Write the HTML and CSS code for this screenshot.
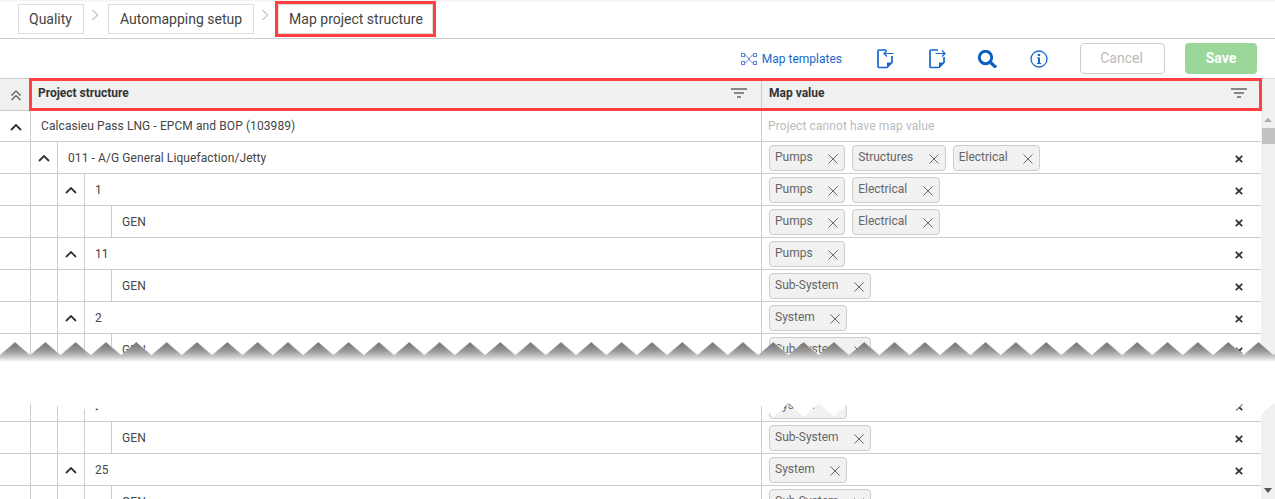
FILE: index.html
```html
<!DOCTYPE html>
<html lang="en">
<head>
  <meta charset="UTF-8">
  <title>Map project structure</title>
  <link rel="stylesheet" href="styles.css">
</head>
<body>
  <nav class="crumbs">
    <a class="crumb crumb-first">Quality</a>
    <svg class="crumb-sep" width="24" height="12" viewBox="0 0 24 12"><path d="M8.5 1l5 5-5 5" fill="none" stroke="#999" stroke-width="1"/></svg>
    <a class="crumb">Automapping setup</a>
    <svg class="crumb-sep" width="24" height="12" viewBox="0 0 24 12"><path d="M8.5 1l5 5-5 5" fill="none" stroke="#999" stroke-width="1"/></svg>
    <a class="crumb crumb-current">Map project structure</a>
  </nav>

  <div class="toolbar">
    <a class="tpl-link">
      <svg width="16" height="12" viewBox="0 0 16 12" fill="none" stroke="#5f86d6" stroke-width="1"><rect x=".5" y=".5" width="3" height="3"/><rect x="12.5" y=".5" width="3" height="3"/><rect x=".5" y="8.5" width="3" height="3"/><rect x="12.5" y="8.5" width="3" height="3"/><path d="M3.5 2C7 2 9 10 12.5 10M3.5 10C7 10 9 2 12.5 2"/></svg>
      Map templates
    </a>
    <svg class="tool tool-first" width="17" height="20" viewBox="0 0 17 20" fill="none" stroke="#1766cf" stroke-width="1.7"><path d="M9 1H2a1 1 0 0 0-1 1v15.500a1 1 0 0 0 1 1h8l5-5V7"/><path d="M10 18.500v-5h5z" fill="#1766cf" stroke="none"/><path d="M16.500 4.500H7M10 1.500l-3 3 3 3" stroke-width="1.200"/></svg>
    <svg class="tool tool-gap" width="17" height="20" viewBox="0 0 17 20" fill="none" stroke="#1766cf" stroke-width="1.7"><path d="M9 1H2a1 1 0 0 0-1 1v15.500a1 1 0 0 0 1 1h8l5-5V8"/><path d="M10 18.500v-5h5z" fill="#1766cf" stroke="none"/><path d="M6.500 4.500h9.500M13 1.500l3 3-3 3" stroke-width="1.200"/></svg>
    <svg class="tool tool-search" width="20" height="18" viewBox="0 0 20 18" fill="none" stroke="#0b5fc4"><circle cx="8.500" cy="7.500" r="6.200" stroke-width="3"/><path d="M13 12l6 5.500" stroke-width="3.200"/></svg>
    <svg class="tool tool-info" width="18" height="18" viewBox="0 0 18 18"><circle cx="9" cy="9" r="8" fill="none" stroke="#1766cf" stroke-width="1.3"/><circle cx="9" cy="5" r="1.3" fill="#1766cf"/><path d="M7 7.500h3v5.500h1.200v1H6.800v-1H8V8.500H7z" fill="#1766cf"/></svg>
    <button class="btn btn-cancel">Cancel</button>
    <button class="btn btn-save">Save</button>
  </div>

  <div class="grid">
    <div class="head-row">
      <div class="head-toggle">
        <svg width="12" height="11" viewBox="0 0 12 11" fill="none" stroke="#555" stroke-width="1.2"><path d="M1.500 5.500L6 1l4.500 4.500M1.500 10L6 5.500l4.500 4.500"/></svg>
      </div>
      <div class="head-cols">
        <div class="head-col head-col-name">Project structure
          <svg class="filter" width="16" height="10" viewBox="0 0 16 10" fill="#888"><path d="M0 0h16v2H0zM3 4h10v2H3zM6 8h4v2H6z"/></svg>
        </div>
        <div class="head-col head-col-value">Map value
          <svg class="filter" width="16" height="10" viewBox="0 0 16 10" fill="#888"><path d="M0 0h16v2H0zM3 4h10v2H3zM6 8h4v2H6z"/></svg>
        </div>
      </div>
      <div class="head-end"></div>
    </div>

    <div class="body">
      <div class="rows">
        <div class="row row-first">
          <div class="tree">
            <span class="lvl lvl-0"><svg class="chev" width="12" height="7" viewBox="0 0 12 7"><path d="M1 6l5-5 5 5"/></svg></span>
            <span class="name">Calcasieu Pass LNG - EPCM and BOP (103989)</span>
          </div>
          <div class="value"><span class="no-value">Project cannot have map value</span></div>
        </div>

        <div class="row">
          <div class="tree">
            <span class="lvl lvl-0"></span>
            <span class="lvl"><svg class="chev" width="12" height="7" viewBox="0 0 12 7"><path d="M1 6l5-5 5 5"/></svg></span>
            <span class="name">011 - A/G General Liquefaction/Jetty</span>
          </div>
          <div class="value">
            <span class="chip">Pumps<svg class="chip-x" width="10" height="10" viewBox="0 0 10 10"><path d="M.5.5l9 9M9.500.5l-9 9"/></svg></span>
            <span class="chip">Structures<svg class="chip-x" width="10" height="10" viewBox="0 0 10 10"><path d="M.5.5l9 9M9.500.5l-9 9"/></svg></span>
            <span class="chip">Electrical<svg class="chip-x" width="10" height="10" viewBox="0 0 10 10"><path d="M.5.5l9 9M9.500.5l-9 9"/></svg></span>
            <svg class="del" width="8" height="8" viewBox="0 0 8 8"><path d="M.8.8l6.400 6.400M7.200.8L.8 7.200"/></svg>
          </div>
        </div>

        <div class="row">
          <div class="tree">
            <span class="lvl lvl-0"></span><span class="lvl"></span>
            <span class="lvl"><svg class="chev" width="12" height="7" viewBox="0 0 12 7"><path d="M1 6l5-5 5 5"/></svg></span>
            <span class="name">1</span>
          </div>
          <div class="value">
            <span class="chip">Pumps<svg class="chip-x" width="10" height="10" viewBox="0 0 10 10"><path d="M.5.5l9 9M9.500.5l-9 9"/></svg></span>
            <span class="chip">Electrical<svg class="chip-x" width="10" height="10" viewBox="0 0 10 10"><path d="M.5.5l9 9M9.500.5l-9 9"/></svg></span>
            <svg class="del" width="8" height="8" viewBox="0 0 8 8"><path d="M.8.8l6.400 6.400M7.200.8L.8 7.200"/></svg>
          </div>
        </div>

        <div class="row">
          <div class="tree">
            <span class="lvl lvl-0"></span><span class="lvl"></span><span class="lvl"></span><span class="lvl"></span>
            <span class="name">GEN</span>
          </div>
          <div class="value">
            <span class="chip">Pumps<svg class="chip-x" width="10" height="10" viewBox="0 0 10 10"><path d="M.5.5l9 9M9.500.5l-9 9"/></svg></span>
            <span class="chip">Electrical<svg class="chip-x" width="10" height="10" viewBox="0 0 10 10"><path d="M.5.5l9 9M9.500.5l-9 9"/></svg></span>
            <svg class="del" width="8" height="8" viewBox="0 0 8 8"><path d="M.8.8l6.400 6.400M7.200.8L.8 7.200"/></svg>
          </div>
        </div>

        <div class="row">
          <div class="tree">
            <span class="lvl lvl-0"></span><span class="lvl"></span>
            <span class="lvl"><svg class="chev" width="12" height="7" viewBox="0 0 12 7"><path d="M1 6l5-5 5 5"/></svg></span>
            <span class="name">11</span>
          </div>
          <div class="value">
            <span class="chip">Pumps<svg class="chip-x" width="10" height="10" viewBox="0 0 10 10"><path d="M.5.5l9 9M9.500.5l-9 9"/></svg></span>
            <svg class="del" width="8" height="8" viewBox="0 0 8 8"><path d="M.8.8l6.400 6.400M7.200.8L.8 7.200"/></svg>
          </div>
        </div>

        <div class="row">
          <div class="tree">
            <span class="lvl lvl-0"></span><span class="lvl"></span><span class="lvl"></span><span class="lvl"></span>
            <span class="name">GEN</span>
          </div>
          <div class="value">
            <span class="chip">Sub-System<svg class="chip-x" width="10" height="10" viewBox="0 0 10 10"><path d="M.5.5l9 9M9.500.5l-9 9"/></svg></span>
            <svg class="del" width="8" height="8" viewBox="0 0 8 8"><path d="M.8.8l6.400 6.400M7.200.8L.8 7.200"/></svg>
          </div>
        </div>

        <div class="row">
          <div class="tree">
            <span class="lvl lvl-0"></span><span class="lvl"></span>
            <span class="lvl"><svg class="chev" width="12" height="7" viewBox="0 0 12 7"><path d="M1 6l5-5 5 5"/></svg></span>
            <span class="name">2</span>
          </div>
          <div class="value">
            <span class="chip">System<svg class="chip-x" width="10" height="10" viewBox="0 0 10 10"><path d="M.5.5l9 9M9.500.5l-9 9"/></svg></span>
            <svg class="del" width="8" height="8" viewBox="0 0 8 8"><path d="M.8.8l6.400 6.400M7.200.8L.8 7.200"/></svg>
          </div>
        </div>

        <div class="row">
          <div class="tree">
            <span class="lvl lvl-0"></span><span class="lvl"></span><span class="lvl"></span><span class="lvl"></span>
            <span class="name">GEN</span>
          </div>
          <div class="value">
            <span class="chip">Sub-System<svg class="chip-x" width="10" height="10" viewBox="0 0 10 10"><path d="M.5.5l9 9M9.500.5l-9 9"/></svg></span>
            <svg class="del" width="8" height="8" viewBox="0 0 8 8"><path d="M.8.8l6.400 6.400M7.200.8L.8 7.200"/></svg>
          </div>
        </div>

        <!-- rows hidden behind the torn edge -->
        <div class="row-gap"></div>

        <div class="row">
          <div class="tree">
            <span class="lvl lvl-0"></span><span class="lvl"></span>
            <span class="lvl"></span>
            <span class="name">24</span>
          </div>
          <div class="value">
            <span class="chip">System<svg class="chip-x" width="10" height="10" viewBox="0 0 10 10"><path d="M.5.5l9 9M9.500.5l-9 9"/></svg></span>
            <svg class="del" width="8" height="8" viewBox="0 0 8 8"><path d="M.8.8l6.400 6.400M7.200.8L.8 7.200"/></svg>
          </div>
        </div>

        <div class="row">
          <div class="tree">
            <span class="lvl lvl-0"></span><span class="lvl"></span><span class="lvl"></span><span class="lvl"></span>
            <span class="name">GEN</span>
          </div>
          <div class="value">
            <span class="chip">Sub-System<svg class="chip-x" width="10" height="10" viewBox="0 0 10 10"><path d="M.5.5l9 9M9.500.5l-9 9"/></svg></span>
            <svg class="del" width="8" height="8" viewBox="0 0 8 8"><path d="M.8.8l6.400 6.400M7.200.8L.8 7.200"/></svg>
          </div>
        </div>

        <div class="row">
          <div class="tree">
            <span class="lvl lvl-0"></span><span class="lvl"></span>
            <span class="lvl"><svg class="chev" width="12" height="7" viewBox="0 0 12 7"><path d="M1 6l5-5 5 5"/></svg></span>
            <span class="name">25</span>
          </div>
          <div class="value">
            <span class="chip">System<svg class="chip-x" width="10" height="10" viewBox="0 0 10 10"><path d="M.5.5l9 9M9.500.5l-9 9"/></svg></span>
            <svg class="del" width="8" height="8" viewBox="0 0 8 8"><path d="M.8.8l6.400 6.400M7.200.8L.8 7.200"/></svg>
          </div>
        </div>

        <div class="row">
          <div class="tree">
            <span class="lvl lvl-0"></span><span class="lvl"></span><span class="lvl"></span><span class="lvl"></span>
            <span class="name">GEN</span>
          </div>
          <div class="value">
            <span class="chip">Sub-System<svg class="chip-x" width="10" height="10" viewBox="0 0 10 10"><path d="M.5.5l9 9M9.500.5l-9 9"/></svg></span>
            <svg class="del" width="8" height="8" viewBox="0 0 8 8"><path d="M.8.8l6.400 6.400M7.200.8L.8 7.200"/></svg>
          </div>
        </div>
      </div>

      <div class="scrollbar">
        <span class="scroll-up"></span>
        <span class="scroll-thumb"></span>
        <span class="scroll-down"></span>
      </div>
    </div>

    <!-- torn paper cut across the screenshot -->
    <svg class="tear" width="1275" height="76" viewBox="0 0 1275 76">
      <defs>
        <linearGradient id="tear-fade" gradientUnits="userSpaceOnUse" x1="0" y1="0" x2="0" y2="20">
          <stop offset="0" stop-color="#707070"/>
          <stop offset=".45" stop-color="#999"/>
          <stop offset=".75" stop-color="#ccc"/>
          <stop offset="1" stop-color="#fff"/>
        </linearGradient>
        <pattern id="tear-tile" patternUnits="userSpaceOnUse" width="30.33" height="76">
          <path d="M0 13L15.170 0 30.330 13V61L15.170 75 0 61z" fill="url(#tear-fade)"/>
          <path d="M15.170 0L30.330 13" fill="none" stroke="#fff" stroke-width=".6"/>
        </pattern>
      </defs>
      <rect width="1275" height="76" fill="url(#tear-tile)"/>
    </svg>
  </div>
</body>
</html>
```

FILE: styles.css
```css
* {
  box-sizing: border-box;
}

html, body {
  height: 100%;
  margin: 0;
  overflow: hidden;
}

body {
  display: flex;
  flex-direction: column;
  background: #fff;
  color: #444;
  font-family: Roboto, "Liberation Sans", sans-serif;
  font-size: 12px;
}

/* breadcrumb */
.crumbs {
  display: flex;
  align-items: flex-start;
  flex: none;
  height: 39px;
  padding: 4px 0 0 18px;
  border-bottom: 1px solid #ccc;
  box-shadow: inset 0 2px 2px -1px #eee;
}

.crumb {
  height: 30px;
  padding: 0 11px;
  border: 1px solid #ddd;
  color: #444;
  font-size: 14px;
  line-height: 28px;
}

.crumb-first {
  padding-left: 10px;
}

.crumb-sep {
  flex: none;
  margin-top: 5px;
}

.crumb-current {
  padding: 0 9px 0 10px;
  outline: 3px solid #ff4040;
}

/* toolbar */
.toolbar {
  display: flex;
  align-items: center;
  justify-content: flex-end;
  flex: none;
  height: 39px;
  padding-right: 18px;
}

.tpl-link {
  display: flex;
  align-items: center;
  gap: 5px;
  color: #1a66cc;
  font-size: 12px;
}

.tool-first {
  margin-left: 35px;
}

.tool-gap {
  margin-left: 35px;
}

.tool-search {
  margin-left: 31px;
}

.tool-info {
  margin-left: 33px;
}

.btn {
  height: 31px;
  padding: 0 0 2px;
  border-radius: 4px;
  font-family: inherit;
  font-size: 14px;
}

.btn-cancel {
  width: 85px;
  margin-left: 32px;
  padding-right: 2px;
  border: 1px solid #ccc;
  background: #fff;
  color: #bbb;
}

.btn-save {
  width: 72px;
  margin-left: 20px;
  border: 0;
  background: #9bd69b;
  color: #fff;
  font-weight: 700;
}

/* grid */
.grid {
  position: relative;
  display: flex;
  flex-direction: column;
  flex: 1;
  min-height: 0;
}

.head-row {
  display: flex;
  flex: none;
  height: 33px;
}

.head-toggle {
  display: flex;
  align-items: center;
  justify-content: center;
  width: 29px;
  padding: 2px 0 0 2px;
  border-top: 1px solid #ccc;
  border-bottom: 1px solid #ccc;
  background: #f0f0f0;
}

.head-cols {
  display: flex;
  width: 1233px;
  border: 3px solid #ff4040;
  background: #f0f0f0;
}

.head-col {
  display: flex;
  align-items: center;
  justify-content: space-between;
  padding-bottom: 3px;
  color: #333;
  font-weight: 700;
  font-size: 12px;
}

.head-col-name {
  width: 730px;
  padding-left: 6px;
  padding-right: 14px;
  border-right: 1px solid #ccc;
}

.head-col-value {
  flex: 1;
  padding-left: 7px;
  padding-right: 12px;
}

.head-end {
  flex: 1;
  border-top: 1px solid #ddd;
  background: #f1f1f1;
}

.body {
  display: flex;
  flex: 1;
  min-height: 0;
  overflow: hidden;
}

.rows {
  flex: none;
  width: 1261px;
}

.row {
  display: flex;
  height: 32px;
  border-bottom: 1px solid #ccc;
}

.row-first {
  height: 31px;
}

.row-gap {
  height: 24px;
}

.tree {
  display: flex;
  flex: none;
  width: 762px;
  border-right: 1px solid #ccc;
}

.lvl {
  display: flex;
  align-items: center;
  justify-content: center;
  flex: none;
  width: 27px;
  padding-top: 1px;
  border-right: 1px solid #ccc;
}

.lvl-0 {
  width: 31px;
  padding-left: 1px;
}

.row-first .lvl {
  padding-top: 3px;
  border-right: 0;
}

.chev {
  fill: none;
  stroke: #333;
  stroke-width: 1.8;
}

.name {
  padding: 9px 0 0 10px;
  line-height: 14px;
  letter-spacing: .09px;
}

.row-first .name {
  padding-top: 8px;
  border-left: 1px solid #ccc;
  margin-left: -1px;
  height: 30px;
}

.value {
  display: flex;
  flex: 1;
  align-items: flex-start;
  gap: 7px;
  padding: 3px 0 0 7px;
}

.no-value {
  margin: 5px 0 0 -1px;
  color: #bbb;
  line-height: 14px;
  letter-spacing: .1px;
}

.chip {
  display: flex;
  align-items: center;
  height: 26px;
  padding: 0 6px 2px 5px;
  border: 1px solid #ccc;
  border-radius: 4px;
  background: #f1f1f1;
  color: #666;
  line-height: 14px;
}

.chip-x {
  margin: 3px 0 0 15.5px;
  fill: none;
  stroke: #666;
  stroke-width: 1;
}

.del {
  margin: 10px 18px 0 auto;
  fill: none;
  stroke: #333;
  stroke-width: 1.8;
}

.scrollbar {
  display: flex;
  flex: 1;
  flex-direction: column;
  align-items: center;
  background: #f1f1f1;
}

.scroll-up {
  flex: none;
  width: 0;
  height: 0;
  margin: 7px 0 6px;
  border-left: 4px solid transparent;
  border-right: 4px solid transparent;
  border-bottom: 4px solid #aaa;
}

.scroll-thumb {
  flex: none;
  align-self: flex-end;
  width: 13px;
  height: 16px;
  background: #c1c1c1;
}

.scroll-down {
  flex: none;
  width: 0;
  height: 0;
  margin: auto 0 6px;
  border-left: 4px solid transparent;
  border-right: 4px solid transparent;
  border-top: 5px solid #555;
}

.tear {
  position: absolute;
  top: 264px;
  left: 0;
}
```
